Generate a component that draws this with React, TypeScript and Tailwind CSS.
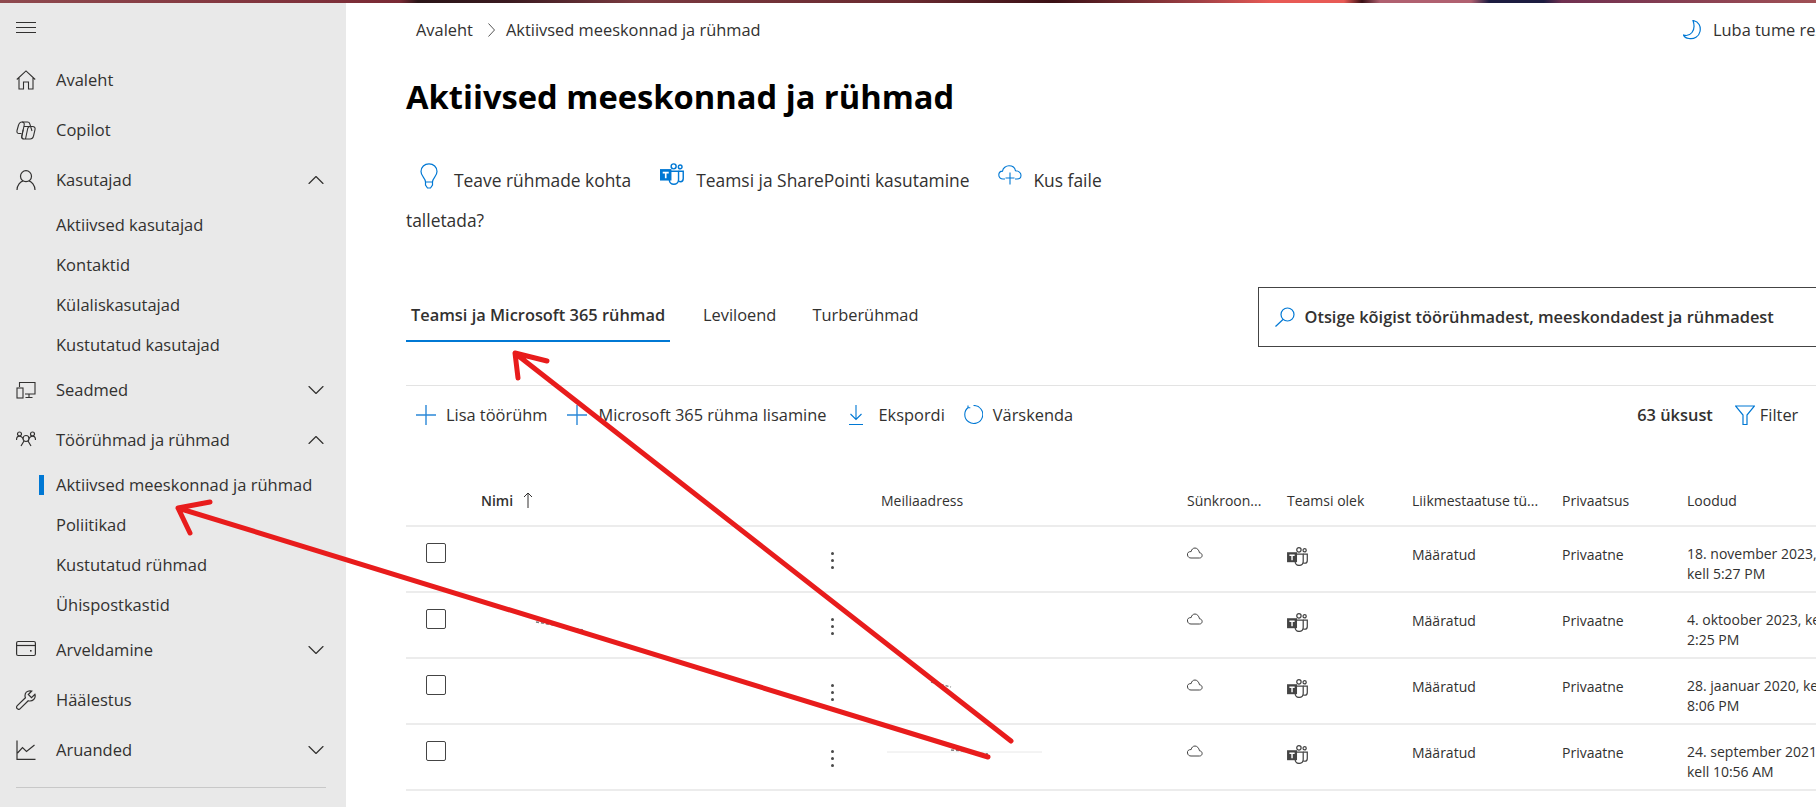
import React from 'react';
import { ChevronDown, ChevronUp } from 'lucide-react';

const ic = 'fill-none stroke-current';

function HomeIcon() {
  return (
    <svg viewBox="0 0 20 20" className={`w-5 h-5 ${ic}`} strokeWidth="1.1">
      <path d="M.8 9.5 10 .9l9.2 8.6M3 8v11h4.500v-7h5v7H17V8" />
    </svg>
  );
}

function CopilotIcon() {
  return (
    <svg viewBox="0 0 20 20" className={`w-5 h-5 ${ic}`} strokeWidth="1.1">
      <path d="M6 2h5.500c1.200 0 2 .6 2.300 1.800L16 11" />
      <path d="M6 2C3.800 2 3 3.400 2.400 5.500L1 10.500C.6 12.400 1.500 13.500 3 13.500h2.500" />
      <path d="M8 6.500h8.500c2 0 3 1.300 2.500 3.200l-1.500 6.500c-.5 1.900-1.500 2.800-3.300 2.800H8c-1.700 0-2.600-1.200-2.200-3l1.400-6.500" />
      <path d="M6 2c1.800 0 2.500 1.200 2.200 3L5.800 16.500c-.3 1.300.4 2.500 1.700 2.500M14 6.500c-1.300 0-2 .8-2.300 2L9.500 19" />
    </svg>
  );
}

function UserIcon() {
  return (
    <svg viewBox="0 0 20 20" className={`w-5 h-5 ${ic}`} strokeWidth="1.2">
      <circle cx="10" cy="6.200" r="5.500" />
      <path d="M1 20c0-5 3.500-8.500 6-9.200M19 20c0-5-3.500-8.500-6-9.200" />
    </svg>
  );
}

function DeviceIcon() {
  return (
    <svg viewBox="0 0 20 20" className={`w-5 h-5 ${ic}`} strokeWidth="1.1">
      <path d="M3.500 7V2.500h15.500v11.500H9M13 14v3M9.500 17.500h7" />
      <rect x="1" y="8" width="6" height="10" />
    </svg>
  );
}

function GroupIcon() {
  return (
    <svg viewBox="0 0 20 20" className={`w-5 h-5 ${ic}`} strokeWidth="1.2">
      <circle cx="3.500" cy="4" r="2" />
      <circle cx="16.500" cy="4" r="2" />
      <circle cx="10" cy="8.500" r="3" />
      <path d="M.5 10c0-2.500 1-3.800 3-3.800 1.500 0 2.500.8 3.800 2.300M19.500 10c0-2.500-1-3.800-3-3.800-1.500 0-2.500.8-3.800 2.300M8 11l-3 5M12 11l3 5" />
    </svg>
  );
}

function CardIcon() {
  return (
    <svg viewBox="0 0 20 20" className={`w-5 h-5 ${ic}`} strokeWidth="1.2">
      <rect x=".6" y="1.500" width="18.800" height="14" rx="1.500" />
      <path d="M.6 5.500h18.800" />
      <rect x="14" y="10" width="1.600" height="1.600" className="fill-current" stroke="none" />
    </svg>
  );
}

function WrenchIcon() {
  return (
    <svg viewBox="0 0 20 20" className={`w-5 h-5 ${ic}`} strokeWidth="1.2">
      <path d="M14 .8c-3 0-5 2.200-5 5 0 .8.200 1.400.4 2L1.300 15.600c-1 1-1 2.200-.1 3.100.9.900 2.100.8 3-.1L12.200 10.700c.6.200 1.200.3 1.800.3 2.900 0 5.200-2.200 5.200-5 0-.7-.1-1.200-.3-1.700L15.500 7.700 12.300 4.500 15.700 1c-.5-.1-1.100-.2-1.700-.2z" />
    </svg>
  );
}

function ChartIcon() {
  return (
    <svg viewBox="0 0 20 20" className={`w-5 h-5 ${ic}`} strokeWidth="1.2">
      <path d="M1 .5v18.800h18.500M1.500 13l5-5.500 4 4 8-6.500" />
    </svg>
  );
}

function TeamsLogo({ className }: { className: string }) {
  return (
    <svg viewBox="0 0 22 20" className={className}>
      <g className="fill-none stroke-current" strokeWidth="1.3">
        <circle cx="12.500" cy="3" r="2.300" />
        <circle cx="18.500" cy="3.500" r="1.700" />
        <path d="M8.500 7.500H17v7.500c0 2.600-1.900 4.400-4.300 4.400S8.500 17.600 8.500 15" />
        <path d="M17 7.500h4.300v6.700c0 1.700-1.100 2.900-2.500 2.900-.6 0-1.200-.2-1.800-.5" />
      </g>
      <rect x="0" y="5.500" width="10.500" height="10.500" className="fill-current" />
      <path d="M2.500 8h5.500v1.500H6v4.500H4.500V9.500h-2z" fill="#fff" />
    </svg>
  );
}

function NavRow({ icon, label, open }: { icon: React.ReactNode; label: string; open?: boolean }) {
  return (
    <div className="h-[50px] flex items-center pl-4 pr-4 text-[#323130]">
      <span className="w-10 shrink-0">{icon}</span>
      <span className="flex-1 text-[16.500px]">{label}</span>
      {open === true && <ChevronUp className="w-7 h-7" strokeWidth={1} />}
      {open === false && <ChevronDown className="w-7 h-7" strokeWidth={1} />}
    </div>
  );
}

function SubRow({ label, active }: { label: string; active?: boolean }) {
  return (
    <div className="h-10 flex items-center pl-[39px] text-[16.500px] text-[#323130]">
      <span className={`w-[5px] h-5 mr-3 ${active ? 'bg-[#0078d4]' : ''}`} />
      {label}
    </div>
  );
}

function Sidebar() {
  return (
    <aside className="w-[346px] shrink-0 bg-[#e9e9e9] h-[804px]">
      <div className="h-[52px] pl-4 pt-[19px]">
        <div className="w-5 h-[11px] flex flex-col justify-between">
          <span className="h-px bg-[#323130]" />
          <span className="h-px bg-[#323130]" />
          <span className="h-px bg-[#323130]" />
        </div>
      </div>
      <NavRow icon={<HomeIcon />} label="Avaleht" />
      <NavRow icon={<CopilotIcon />} label="Copilot" />
      <NavRow icon={<UserIcon />} label="Kasutajad" open />
      <SubRow label="Aktiivsed kasutajad" />
      <SubRow label="Kontaktid" />
      <SubRow label="Külaliskasutajad" />
      <SubRow label="Kustutatud kasutajad" />
      <NavRow icon={<DeviceIcon />} label="Seadmed" open={false} />
      <NavRow icon={<GroupIcon />} label="Töörühmad ja rühmad" open />
      <SubRow label="Aktiivsed meeskonnad ja rühmad" active />
      <SubRow label="Poliitikad" />
      <SubRow label="Kustutatud rühmad" />
      <SubRow label="Ühispostkastid" />
      <NavRow icon={<CardIcon />} label="Arveldamine" open={false} />
      <NavRow icon={<WrenchIcon />} label="Häälestus" />
      <NavRow icon={<ChartIcon />} label="Aruanded" open={false} />
      <div className="mt-3 ml-4 w-[310px] border-t border-[#c8c8c8]" />
    </aside>
  );
}

const rows = [
  { date: '18. november 2023,', time: 'kell 5:27 PM' },
  { date: '4. oktoober 2023, kell', time: '2:25 PM' },
  { date: '28. jaanuar 2020, kell', time: '8:06 PM' },
  { date: '24. september 2021,', time: 'kell 10:56 AM' },
];

const gridCols = 'grid grid-cols-[75px_340px_60px_306px_100px_125px_150px_125px_200px]';

function PlusIcon() {
  return (
    <svg viewBox="0 0 20 20" className="w-5 h-5 fill-none stroke-[#2b88d8]" strokeWidth="1.4">
      <path d="M10 0v20M0 10h20" />
    </svg>
  );
}

function Toolbar() {
  return (
    <div className="h-[59px] flex items-center border-t border-[#e3e3e3] pl-[10px] text-[16.400px] text-[#323130]">
      <PlusIcon />
      <span className="ml-[10px]">Lisa töörühm</span>
      <span className="ml-5"><PlusIcon /></span>
      <span className="ml-[11px]">Microsoft 365 rühma lisamine</span>
      <svg viewBox="0 0 14 20" className="ml-[23px] w-[14px] h-5 fill-none stroke-[#0078d4]" strokeWidth="1.1">
        <path d="M7 0v14M1.500 9 7 14.500 12.500 9M0 19.500h14" />
      </svg>
      <span className="ml-[15px]">Ekspordi</span>
      <svg viewBox="0 0 20 20" className="ml-[18px] w-5 h-5 fill-none stroke-[#0078d4]" strokeWidth="1.1">
        <path d="M5.500 2.200a9 9 0 1 0 5-1.700M5 .5v2.200h2.300" />
      </svg>
      <span className="ml-[10px]">Värskenda</span>
      <span className="ml-[564px] font-semibold">63 üksust</span>
      <svg viewBox="0 0 20 20" className="ml-[22px] w-5 h-5 fill-none stroke-[#0078d4]" strokeWidth="1.2">
        <path d="M.5 1h19l-7.500 9v9.500H8V10z" />
      </svg>
      <span className="ml-[5px]">Filter</span>
    </div>
  );
}

function GroupTable() {
  return (
    <div className="text-[14px] text-[#323130]">
      <div className={`${gridCols} h-[83px] items-center pt-[31px] border-b-2 border-[#ececec]`}>
        <span />
        <span className="flex items-center gap-[10px] font-semibold">
          Nimi
          <svg viewBox="0 0 10 16" className="w-[10px] h-4 fill-none stroke-[#323130]" strokeWidth="1">
            <path d="M5 16V1M1 5l4-4 4 4" />
          </svg>
        </span>
        <span />
        <span>Meiliaadress</span>
        <span>Sünkroon...</span>
        <span>Teamsi olek</span>
        <span>Liikmestaatuse tü...</span>
        <span>Privaatsus</span>
        <span>Loodud</span>
      </div>
      {rows.map((row) => (
        <div key={row.date} className={`${gridCols} h-[66px] border-b-2 border-[#ececec] pt-4`}>
          <div className="pl-5">
            <div className="w-5 h-5 rounded-[2px] border border-[#444]" />
          </div>
          <span />
          <div className="pl-[10px] pt-[9px] flex flex-col gap-1">
            <span className="w-[3px] h-[3px] rounded-full bg-[#4a4a4a]" />
            <span className="w-[3px] h-[3px] rounded-full bg-[#4a4a4a]" />
            <span className="w-[3px] h-[3px] rounded-full bg-[#4a4a4a]" />
          </div>
          <span />
          <svg viewBox="0 0 16 12" className="w-4 h-3 mt-[4px] fill-none stroke-[#444]" strokeWidth="1">
            <path d="M4 11h8.500c3.500 0 3.500-5 0-5.200C12 3 10 1 8 1 6 1 4.500 2.500 4.200 4.500 1.500 4.500 0 6 .5 8c.3 2 1.700 3 3.500 3z" />
          </svg>
          <TeamsLogo className="w-[21px] h-[19px] mt-[4px] text-[#444]" />
          <span className="pt-px">Määratud</span>
          <span className="pt-px">Privaatne</span>
          <div className="pt-px leading-5">
            <div className="whitespace-nowrap">{row.date}</div>
            <div>{row.time}</div>
          </div>
        </div>
      ))}
    </div>
  );
}

export default function App() {
  return (
    <div className="relative w-[1816px] h-[807px] overflow-hidden bg-white font-['Open_Sans','Noto_Sans',sans-serif]">
      <div className="h-[3px] bg-[linear-gradient(90deg,#8f4a4f_0%,#7a2a35_22%,#2a1518_23%,#3a1a20_28%,#7a3a40_35%,#6a2a30_50%,#3a1015_58%,#a04045_66%,#e85a55_70%,#e85a55_74%,#3a1015_75%,#b06070_76%,#b06070_81%,#1c1c40_82%,#1c1c40_85%,#703050_86%,#a05055_100%)]" />
      <div className="flex">
        <Sidebar />
        <main className="flex-1 pl-[60px] overflow-hidden">
          <div className="w-[1600px]">
            <div className="h-[54px] flex items-center pl-[10px] text-[16.400px] text-[#323130]">
              <span className="w-[57px] whitespace-nowrap">Avaleht</span>
              <svg viewBox="0 0 7 14" className="ml-[15px] mr-[11px] w-[7px] h-[14px] fill-none stroke-[#555]" strokeWidth="1">
                <path d="M.5.5 6.500 7 .5 13.500" />
              </svg>
              <span className="w-[1177px]">Aktiivsed meeskonnad ja rühmad</span>
              <svg viewBox="0 0 18 20" className="w-[18px] h-5 fill-none stroke-[#0078d4]" strokeWidth="1.2">
                <path d="M10 .5c6 1 8 6 7 11-1 5-6 8-11 7-3-.5-5-2-5.500-3.500 3 1 6.500 0 8.500-2.500S11.500 5 10 .5z" />
              </svg>
              <span className="ml-3 whitespace-nowrap">Luba tume režiim</span>
            </div>
            <h1 className="mt-[17px] h-[46px] text-[32.700px] leading-[46px] font-bold text-black">
              Aktiivsed meeskonnad ja rühmad
            </h1>
            <div className="mt-10 w-[705px] text-[17.400px] leading-10 text-[#323130]">
              <svg viewBox="0 0 18 26" className="inline-block ml-[14px] mr-4 w-[18px] h-[26px] align-[-2px] fill-none stroke-[#0078d4]" strokeWidth="1.2">
                <path d="M5.500 19c0-4-4.500-5.500-4.500-10.500C1 4 4.500.8 9 .8s8 3.200 8 7.700c0 5-4.500 6.500-4.500 10.500zM5.500 19v3l2 3h3l2-3v-3" />
              </svg>
              <span>Teave rühmade kohta</span>
              <TeamsLogo className="inline-block ml-[29px] mr-3 w-6 h-[22px] align-[2px] text-[#0078d4]" />
              <span>Teamsi ja SharePointi kasutamine</span>
              <svg viewBox="0 0 24 20" className="inline-block ml-[29px] mr-[11px] w-6 h-5 align-[2px] fill-none stroke-[#0078d4]" strokeWidth="1.1">
                <path d="M7 14H5C2.500 14 .8 12.300.8 10c0-2.200 1.500-3.800 3.700-3.900C5 3 8 .8 11 .8c3.500 0 6 2.200 6.500 5 3 0 5.500 2 5.500 4.400 0 2.200-1.500 3.800-4 3.800h-2M12 7.500V19.500M7.500 13H16.500" />
              </svg>
              <span>Kus faile</span> <span>talletada?</span>
            </div>
            <div className="mt-[47px] h-[98px] flex items-start text-[16.400px] text-[#323130]">
              <div className="h-[55px] w-[264px] border-b-2 border-[#0078d4] pt-4 pl-[5px] font-semibold whitespace-nowrap">
                Teamsi ja Microsoft 365 rühmad
              </div>
              <div className="ml-[33px] pt-4">Leviloend</div>
              <div className="ml-9 pt-4">Turberühmad</div>
              <div className="ml-[339px] w-[700px] h-[60px] border border-[#444] flex items-center pl-4">
                <svg viewBox="0 0 20 20" className="w-5 h-5 fill-none stroke-[#0078d4]" strokeWidth="1.200">
                  <circle cx="12.500" cy="7.500" r="6.500" />
                  <path d="M8 12.500.5 19.500" />
                </svg>
                <span className="ml-[10px] font-semibold">Otsige kõigist töörühmadest, meeskondadest ja rühmadest</span>
              </div>
            </div>
            <Toolbar />
            <GroupTable />
          </div>
        </main>
      </div>
      {/* hand-drawn red arrows over the screenshot */}
      <svg viewBox="0 0 1816 807" className="absolute inset-0 w-[1816px] h-[807px] pointer-events-none fill-none">
        <g stroke="#444" strokeWidth="1.5" opacity="0.7" strokeDasharray="3 2">
          <path d="M536 622l47 8M951 750l37 4M931 682l20 5" />
        </g>
        <path d="M887 752h155" stroke="#e8e8e8" strokeWidth="1" />
        <g stroke="#e81c1c" strokeWidth="5" strokeLinecap="round" strokeLinejoin="round">
          <path d="M1011 741 516 354M547 361l-32-8 3 25" />
          <path d="M988 757 178 508M210 502l-32 6 12 25" />
        </g>
      </svg>
    </div>
  );
}
